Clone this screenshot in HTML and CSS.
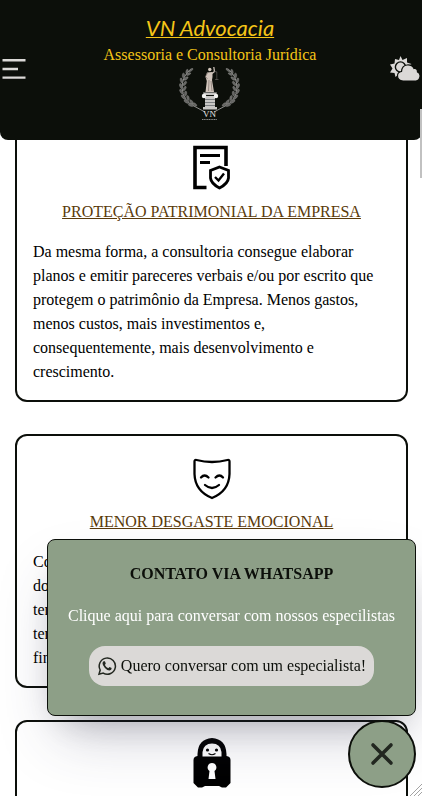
FILE: index.html
```html
<!DOCTYPE html>
<html lang="pt-BR">
<head>
<meta charset="utf-8">
<meta name="viewport" content="width=device-width, initial-scale=1">
<title>VN Advocacia</title>
<link rel="stylesheet" href="styles.css">
</head>
<body>
<header class="topbar">
  <button class="icon-button" type="button" aria-label="Menu">
    <svg width="28" height="28" viewBox="0 0 28 28" fill="none" stroke="#dbd9d7" stroke-width="2.400"><path d="M2.500 5.200h23M2.500 14h15.500M2.500 22.600h23"/></svg>
  </button>
  <div class="brand">
    <a class="brand-name" href="#">VN Advocacia</a>
    <span class="brand-sub">Assessoria e Consultoria Jurídica</span>
    <svg class="brand-logo" width="61" height="56" viewBox="0 0 61 56">
      <defs>
        <g id="wreath">
          <path d="M12 3Q3 10 3 22Q4 34 13 39L26 46" fill="none" stroke="#8d8d8b" stroke-width="1"/>
          <g fill="#666664" stroke="#a4a4a0" stroke-width=".3">
            <ellipse cx="12" cy="4" rx="2.400" ry="1" transform="rotate(-35 12 4)"/>
            <ellipse cx="8" cy="5.500" rx="2.300" ry="1.100" transform="rotate(-75 8 5.500)"/>
            <ellipse cx="9.500" cy="8" rx="2.400" ry="1.100" transform="rotate(-25 9.500 8)"/>
            <ellipse cx="4.500" cy="9.500" rx="2.500" ry="1.200" transform="rotate(-90 4.500 9.500)"/>
            <ellipse cx="7" cy="12.500" rx="2.500" ry="1.200" transform="rotate(-35 7 12.500)"/>
            <ellipse cx="2.500" cy="14.500" rx="2.600" ry="1.200" transform="rotate(75 2.500 14.500)"/>
            <ellipse cx="5.800" cy="17.500" rx="2.500" ry="1.200" transform="rotate(-50 5.800 17.500)"/>
            <ellipse cx="1.900" cy="20" rx="2.600" ry="1.200" transform="rotate(68 1.900 20)"/>
            <ellipse cx="5.600" cy="22.500" rx="2.500" ry="1.200" transform="rotate(-60 5.600 22.500)"/>
            <ellipse cx="2.400" cy="25.500" rx="2.600" ry="1.300" transform="rotate(58 2.400 25.500)"/>
            <ellipse cx="6.600" cy="27.500" rx="2.500" ry="1.200" transform="rotate(-85 6.600 27.500)"/>
            <ellipse cx="4.400" cy="31" rx="2.800" ry="1.300" transform="rotate(45 4.400 31)"/>
            <ellipse cx="9" cy="32" rx="2.500" ry="1.200" transform="rotate(75 9 32)"/>
            <ellipse cx="7.500" cy="35.500" rx="2.800" ry="1.400" transform="rotate(30 7.500 35.500)"/>
            <ellipse cx="12.500" cy="36" rx="2.600" ry="1.300" transform="rotate(55 12.500 36)"/>
            <ellipse cx="12" cy="39" rx="2.800" ry="1.300" transform="rotate(15 12 39)"/>
            <ellipse cx="16" cy="38.500" rx="2.200" ry="1.100" transform="rotate(40 16 38.500)"/>
          </g>
        </g>
      </defs>
      <use href="#wreath"/>
      <use href="#wreath" transform="translate(61 0) scale(-1 1)"/>
      <path d="M33 7.500L35.500 5.500L34.800 1" stroke="#c9beb6" stroke-width="1.300" fill="none"/>
      <path d="M34.500 5L38 6M37.800 6V14M36 13.500H39.500" stroke="#6e6a66" stroke-width=".6" fill="none"/>
      <circle cx="30.800" cy="3.500" r="1.700" fill="#d4c8be"/>
      <path d="M28 6.500L33.500 6L33.500 11L33 14L35 26H26.500L27.800 15L26.500 11Z" fill="#d0c4bb"/>
      <path d="M28.500 7L26.500 10.500L28.500 13M30 14L29.500 25M32 15L33 25" stroke="#7c706a" stroke-width=".7" fill="none"/>
      <path d="M24 26.500H38L37 29H25ZM26 30H36V41H26ZM24 41H38V43.500H24Z" fill="#c8c7c5"/>
      <circle cx="25" cy="30" r="2.200" fill="#f2f2f0"/><circle cx="37" cy="30" r="2.200" fill="#f2f2f0"/>
      <path d="M26 33.500H36M26 36.500H36M26 39.500H36" stroke="#73777a" stroke-width=".9"/>
      <text class="logo-initials" x="30.500" y="51" text-anchor="middle">VN</text>
      <path d="M23 53.500H38" stroke="#8a8a8a" stroke-width="1.200" stroke-dasharray="1.200 .5"/>
    </svg>
  </div>
  <button class="icon-button icon-button-end" type="button" aria-label="Alternar tema">
    <svg width="32" height="28" viewBox="0 0 32 28">
      <path fill="#dbd9d7" d="M12.500 1L14.500 5L19 3L19 7.500L23.500 9L18 13L15 20L10.500 19.500L7.500 22L6.500 18L2 17.500L4.500 13.500L2 9.500L6.500 8.500L7 4L11 5Z"/>
      <circle cx="12.500" cy="12" r="5.800" fill="#0c0f0a"/><circle cx="12.500" cy="12" r="4.400" fill="#dbd9d7"/>
      <path fill="#dbd9d7" stroke="#0c0f0a" stroke-width="1.200" d="M15 26Q9.500 25.500 9.500 21Q9.500 17 13.500 16.500Q14 10.500 19 10Q24 9.500 26 13.500Q29.500 13 29.500 17Q32.500 18.500 32 21.500Q31.500 25.500 28 26Z"/>
    </svg>
  </button>
</header>

<main class="cards">
  <article class="card">
    <svg width="50" height="50" viewBox="0 0 50 50" fill="none" stroke="#000">
      <path d="M19.500 45.500H8V5.500H39V24" stroke-width="3.600"/>
      <path d="M13 13.500H33M13 20.500H23" stroke-width="3"/>
      <path d="M32.500 25L41.500 28.500V36Q41 41.500 32.500 46Q24 41.500 23.500 36V28.500Z" stroke-width="2.800"/>
      <path d="M28 35L31.500 38.500L37 31.500" stroke-width="2.400"/>
    </svg>
    <h2 class="card-title">PROTEÇÃO PATRIMONIAL DA EMPRESA</h2>
    <p class="card-text">Da mesma forma, a consultoria consegue elaborar planos e emitir pareceres verbais e/ou por escrito que protegem o patrimônio da Empresa. Menos gastos, menos custos, mais investimentos e, consequentemente, mais desenvolvimento e crescimento.</p>
  </article>
  <article class="card">
    <svg width="50" height="50" viewBox="0 0 50 50" fill="none" stroke="#000" stroke-width="2.300" stroke-linecap="round">
      <path d="M9.500 8Q7.500 7.500 7.500 9.500V22Q8 39 25 46Q42 39 42.500 22V9.500Q42.500 7.500 40.500 8Q25 12 9.500 8Z" stroke-linejoin="round"/>
      <path d="M14 25.500Q17.500 21.500 21.500 25.500M28.500 25.500Q32.500 21.500 36 25.500M18 33Q25 39 32 33"/>
    </svg>
    <h2 class="card-title">MENOR DESGASTE EMOCIONAL</h2>
    <p class="card-text">Com a consultoria preventiva, o desgaste<br>do empresário é menor, pois os problemas<br>tendem a ser resolvidos com cautela,<br>tendo mais tranquilidade para decidir no<br>final.</p>
  </article>
  <article class="card card-brief">
    <svg width="50" height="50" viewBox="0 0 50 50">
      <path d="M10.500 18V16Q11 1 25 0Q39 1 39.500 16V18Q43.500 18.500 43.500 22V45L39 49.500H35L32 48H18L15 49.500H11L6.500 45V22Q6.500 18.500 10.500 18Z" fill="#000"/>
      <path d="M15.500 18.500V14Q16.500 5.500 25 5.500Q33.500 5.500 34.500 14V18.500Z" fill="#fff"/>
      <circle cx="20.500" cy="12" r="1.600"/><circle cx="29.500" cy="12" r="1.600"/>
      <path d="M21.500 15.500Q25 18 28.500 15.500" fill="none" stroke="#000" stroke-width="1.100"/>
      <path d="M25 25A4.400 4.400 0 0 1 27.500 33L28.500 41H21.500L22.500 33A4.400 4.400 0 0 1 25 25Z" fill="#fff"/>
    </svg>
  </article>
</main>

<section class="popup">
  <h2 class="popup-title">CONTATO VIA WHATSAPP</h2>
  <p class="popup-text">Clique aqui para conversar com nossos especilistas</p>
  <a class="popup-link" href="#">
    <svg width="20" height="20" viewBox="0 0 20 20" fill="none" stroke="#222720" stroke-width="1.500">
      <path d="M2 18.200L3.200 14A8.100 8.100 0 1 1 6.200 17.100Z"/>
      <path d="M6.600 5.200L7.900 5.300L8.800 7.600L7.900 8.900Q9 11.200 11.300 12.200L12.500 11L14.700 12.100Q14.700 14.300 12.500 14.500Q10.400 14.500 7.900 12Q5.400 9.300 5.500 7.300Q5.500 6 6.600 5.200Z" fill="#222720" stroke="none"/>
    </svg>
    Quero conversar com um especialista!
  </a>
</section>

<button class="popup-close" type="button" aria-label="Fechar contato">
  <svg width="28" height="28" viewBox="0 0 28 28" stroke="#222720" stroke-width="3.600" stroke-linecap="round"><path d="M5 5L23 23M23 5L5 23"/></svg>
</button>
<div class="scroll-thumb"></div>
<svg class="grip" width="12" height="12" viewBox="0 0 12 12" stroke="#8b8b8b" stroke-width=".8"><path d="M0 12L12 0M4 12L12 4M8 12L12 8"/></svg>
</body>
</html>
```
FILE: styles.css
```css
* {
  box-sizing: border-box;
}

html {
  scrollbar-width: none;
}

body {
  margin: 0;
  background: #fff;
  color: #000;
  font: 16px/24px "Liberation Serif", serif;
}

h2,
p {
  margin: 0;
  font-size: 16px;
}

svg {
  display: block;
}

button {
  padding: 0;
  cursor: pointer;
}

.topbar {
  position: sticky;
  top: 0;
  z-index: 2;
  display: grid;
  grid-template-columns: 1fr auto 1fr;
  align-items: center;
  padding: 16px 2px 18px 0;
  background: #0c0f0a;
  border-radius: 0 0 8px 8px;
}

.icon-button {
  justify-self: start;
  border: 0;
  background: none;
}

.icon-button-end {
  justify-self: end;
}

.brand {
  display: flex;
  flex-direction: column;
  align-items: center;
  color: #f5c518;
}

.brand-name {
  margin-bottom: 3px;
  color: inherit;
  font: italic 22px/24px Lato, sans-serif;
  text-decoration: underline;
  text-decoration-thickness: 1px;
}

.brand-logo {
  margin-top: -1px;
}

.logo-initials {
  fill: #e5e5e5;
  font-size: 9px;
}

.cards {
  display: flex;
  flex-direction: column;
  gap: 32px;
  margin-top: -16px;
  padding: 0 14px 0 15px;
}

.card {
  display: flex;
  flex-direction: column;
  align-items: center;
  padding: 16px;
  border: 2px solid #0c0f0a;
  border-radius: 12px;
}

.card-brief {
  padding-bottom: 48px;
}

.card-title {
  margin-top: 8px;
  color: #5a3a0a;
  font-weight: 400;
  text-decoration: underline;
}

.card-text {
  align-self: stretch;
  margin-top: 16px;
}

.popup {
  position: fixed;
  right: 6px;
  bottom: 80px;
  z-index: 3;
  display: flex;
  flex-direction: column;
  align-items: center;
  gap: 18px;
  padding: 22px 20px 29px;
  border: 1px solid #0c0f0a;
  border-radius: 8px;
  background: #8d9f87;
  box-shadow: 0 30px 60px -12px rgba(50, 50, 93, 0.25), 0 18px 36px -18px rgba(0, 0, 0, 0.3);
}

.popup-title {
  color: #0c0f0a;
}

.popup-text {
  color: #fff;
}

.popup-link {
  display: flex;
  align-items: center;
  gap: 4px;
  padding: 8px;
  border-radius: 16px;
  background: #dbd9d7;
  color: #0c0f0a;
  text-decoration: none;
}

.popup-close {
  position: fixed;
  right: 6px;
  bottom: 8px;
  z-index: 3;
  display: grid;
  place-items: center;
  width: 68px;
  height: 68px;
  border: 2px solid #0c0f0a;
  border-radius: 50%;
  background: #8d9f87;
}

.scroll-thumb {
  position: fixed;
  top: 109px;
  right: 0;
  z-index: 4;
  width: 2px;
  height: 69px;
  background: #c1c1c1;
}

.grip {
  position: fixed;
  right: 0;
  bottom: 0;
}
```
